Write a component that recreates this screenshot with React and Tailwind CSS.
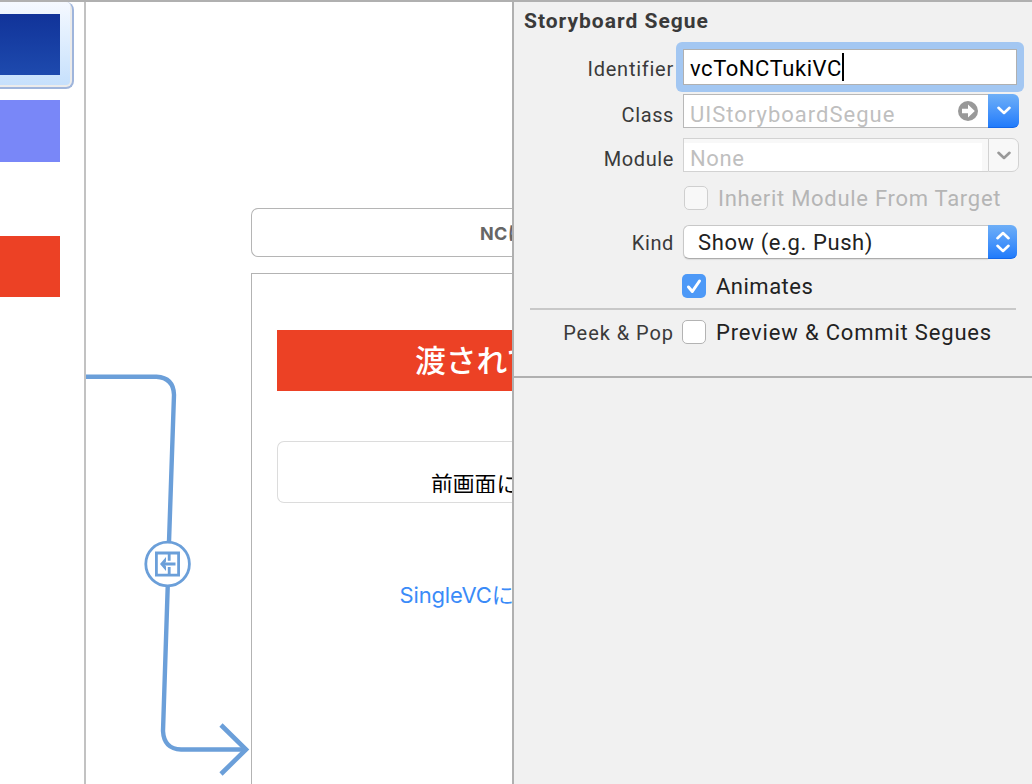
const Label = ({ children, className = "" }) => (
  <div className={"w-[160px] shrink-0 whitespace-nowrap text-right text-[20px] leading-[34px] tracking-[0.6px] text-[#3a3a3a] " + className}>
    {children}
  </div>
);

const Chevron = ({ color }) => (
  <svg width="14" height="9" viewBox="0 0 14 9" fill="none" stroke={color} strokeWidth="2.6" strokeLinecap="round" strokeLinejoin="round">
    <path d="M1.500 1.800 7 7l5.500-5.200" />
  </svg>
);

function Outline() {
  return (
    <div className="flex w-[86px] shrink-0 flex-col border-r-2 border-[#c2c2c2]">
      <div className="h-[87px] w-[74px] rounded-r-[8px] border-b-2 border-r-2 border-[#9fb5dc] bg-[#ebebeb] pb-[2px] pr-[2px]">
        <div className="h-full rounded-r-[4px] bg-linear-to-b from-[#f5f9ff] to-[#c6e0fc] pt-[12px]">
          <div className="h-[61px] w-[60px] bg-linear-to-b from-[#113399] to-[#1e4aae]" />
        </div>
      </div>
      <div className="mt-[11px] h-[62px] w-[60px] bg-[#7987f8]" />
      <div className="mt-[74px] h-[61px] w-[60px] bg-[#ec4125]" />
    </div>
  );
}

function Segue() {
  return (
    <svg className="mt-[358px] h-[424px] w-[165px] shrink-0" viewBox="86 360 165 424" fill="none" stroke="#6b9fd9">
      <path strokeWidth="4.400" d="M86 376.700h70.500q17 1 17.500 18L169 542M167.700 587 163 731q1 18 18 18.500h66" />
      <path strokeWidth="4.600" d="M221 725 246 749.500 221 774" />
      <circle cx="167.600" cy="564" r="21.800" strokeWidth="2.800" />
      <path strokeWidth="2.800" d="M156.400 553h22.200v22.200h-22.200zM169.200 553v7.800M169.200 567v8M162 564h13.500" />
      <path fill="#6b9fd9" stroke="none" d="M160 564 166 557v4.500l-1.500 2.500 1.500 2.500v4.500z" />
    </svg>
  );
}

function Scene() {
  return (
    <div className="flex w-[261px] shrink-0 flex-col overflow-hidden whitespace-nowrap pt-[206px]">
      <div className="h-[49px] rounded-l-[7px] border-[1.500px] border-r-0 border-[#b5b5b5] pl-[228px] font-[Inter,'Noto_Sans_CJK_JP',sans-serif] text-[18px] font-bold leading-[49px] tracking-[0.4px] text-[#666]">
        NCに
      </div>
      <div className="mt-4 flex grow flex-col border-l border-t border-[#b3b3b3] pl-[25px] font-[Inter,'Noto_Sans_CJK_JP',sans-serif]">
        <div className="mt-14 h-[61px] bg-[#ec4125] pl-[138px] text-[30.800px] font-medium leading-[61px] text-white">渡されて</div>
        <div className="mt-[50px] h-[62px] rounded-l-[7px] border border-r-0 border-[#dcdcdc] pl-[153px] pt-[25px]">
          <div className="h-[26px] overflow-hidden text-[21.800px] leading-[35px] text-black">前画面に</div>
        </div>
        <div className="mt-[74px] pl-[122.500px] text-[22px] leading-[36px] tracking-[-0.15px] text-[#3a8bf8]">SingleVCに</div>
      </div>
    </div>
  );
}

function Inspector() {
  return (
    <div className="w-[520px] shrink-0 whitespace-nowrap border-l-2 border-[#b0b0b0] bg-[#f1f1f1] font-[Roboto,sans-serif] text-[22px] text-[#222]">
      <div className="h-[376px] border-b-2 border-[#b0b0b0]">
        <div className="h-10 pl-[10px] text-[21px] font-bold leading-[38px] tracking-[1px] text-[#3a3a3a]">Storyboard Segue</div>

        <div className="flex h-[50px]">
          <Label className="pt-[10px] tracking-[0.75px]">Identifier</Label>
          <div className="ml-[2px] h-[50px] w-[348px] rounded-[6px] bg-[#a3c7f2] p-[7px]">
            <div className="flex h-9 items-center border border-[#b0b0b0] bg-white pl-[6px] tracking-[0.55px] text-black">
              <span className="pt-[2px]">vcToNCTukiVC</span>
              <span className="h-7 w-[2px] bg-black" />
            </div>
          </div>
        </div>

        <div className="mt-[2px] flex h-[34px]">
          <Label className="pt-[4px]">Class</Label>
          <div className="ml-[9px] flex w-[305px] items-center border border-r-0 border-[#b8b8b8] bg-white pl-[6px] pr-[10px] text-[#bfbfbf]">
            <span className="pt-[7px] tracking-[1px]">UIStoryboardSegue</span>
            <svg className="ml-auto" width="20" height="20" viewBox="0 0 20 20">
              <circle cx="10" cy="10" r="10" fill="#999" />
              <path fill="#fff" d="M4 7.700h6V3.500l6.800 6.500-6.800 6.500v-4.200H4z" />
            </svg>
          </div>
          <div className="flex w-[31px] items-center justify-center rounded-r-[6px] border-b border-[#1567e8] bg-linear-to-b from-[#6eaff7] to-[#207bfb]">
            <Chevron color="#fff" />
          </div>
        </div>

        <div className="mt-[10px] flex h-[34px]">
          <Label className="pt-[4px]">Module</Label>
          <div className="ml-[9px] flex w-[305px] border border-r-0 border-[#d2d2d2] bg-[#f8f8f8] pr-[6px] pt-1 text-[#bfbfbf]">
            <span className="w-full bg-white pl-[6px] leading-[31px] tracking-[0.6px]">None</span>
          </div>
          <div className="flex w-[31px] items-center justify-center rounded-r-[7px] border border-[#d2d2d2] bg-[#f8f8f8]">
            <Chevron color="#999" />
          </div>
        </div>

        <div className="mt-[14px] flex h-6 items-center">
          <div className="ml-[170px] size-6 rounded-[5px] border-[1.500px] border-[#cfcfcf] bg-[#f8f8f8]" />
          <span className="ml-[10px] tracking-[0.72px] text-[#b5b5b5]">Inherit Module From Target</span>
        </div>

        <div className="mt-[15px] flex h-[34px]">
          <Label className="pt-px">Kind</Label>
          <div className="ml-[9px] flex w-[305px] items-center rounded-l-[6px] border border-r-0 border-[#c8c8c8] border-b-[#acacac] bg-white pl-[14px] tracking-[0.6px] shadow-[0_1px_1px_#ddd]">
            Show (e.g. Push)
          </div>
          <div className="flex w-[29px] flex-col items-center justify-center gap-1 rounded-r-[6px] border-b border-[#1567e8] bg-linear-to-b from-[#6eaff7] to-[#207bfb]">
            <span className="flex rotate-180"><Chevron color="#fff" /></span>
            <Chevron color="#fff" />
          </div>
        </div>

        <div className="mt-[15px] flex h-6 items-center">
          <div className="ml-[168px] flex size-6 items-center justify-center rounded-[5px] bg-[#4d99f7]">
            <svg width="24" height="24" viewBox="0 0 24 24" fill="none" stroke="#fff" strokeWidth="3" strokeLinecap="round" strokeLinejoin="round">
              <path d="m6.500 13 3.800 4.500L17.500 7" />
            </svg>
          </div>
          <span className="ml-[10px] tracking-[0.5px]">Animates</span>
        </div>

        <div className="ml-4 mt-[10px] h-[2px] w-[486px] bg-[#c8c8c8]" />

        <div className="mt-[10px] flex h-6 items-center">
          <Label className="pt-[2px] tracking-[0.95px]">Peek &amp; Pop</Label>
          <div className="ml-2 size-6 shrink-0 rounded-[5px] border-[1.500px] border-[#b3b3b3] bg-white" />
          <span className="ml-[10px] tracking-[0.82px]">Preview &amp; Commit Segues</span>
        </div>
      </div>
    </div>
  );
}

export default function App() {
  return (
    <div className="flex h-[784px] w-[1032px] overflow-hidden border-t-2 border-[#b0b0b0] bg-white">
      <Outline />
      <Segue />
      <Scene />
      <Inspector />
    </div>
  );
}
